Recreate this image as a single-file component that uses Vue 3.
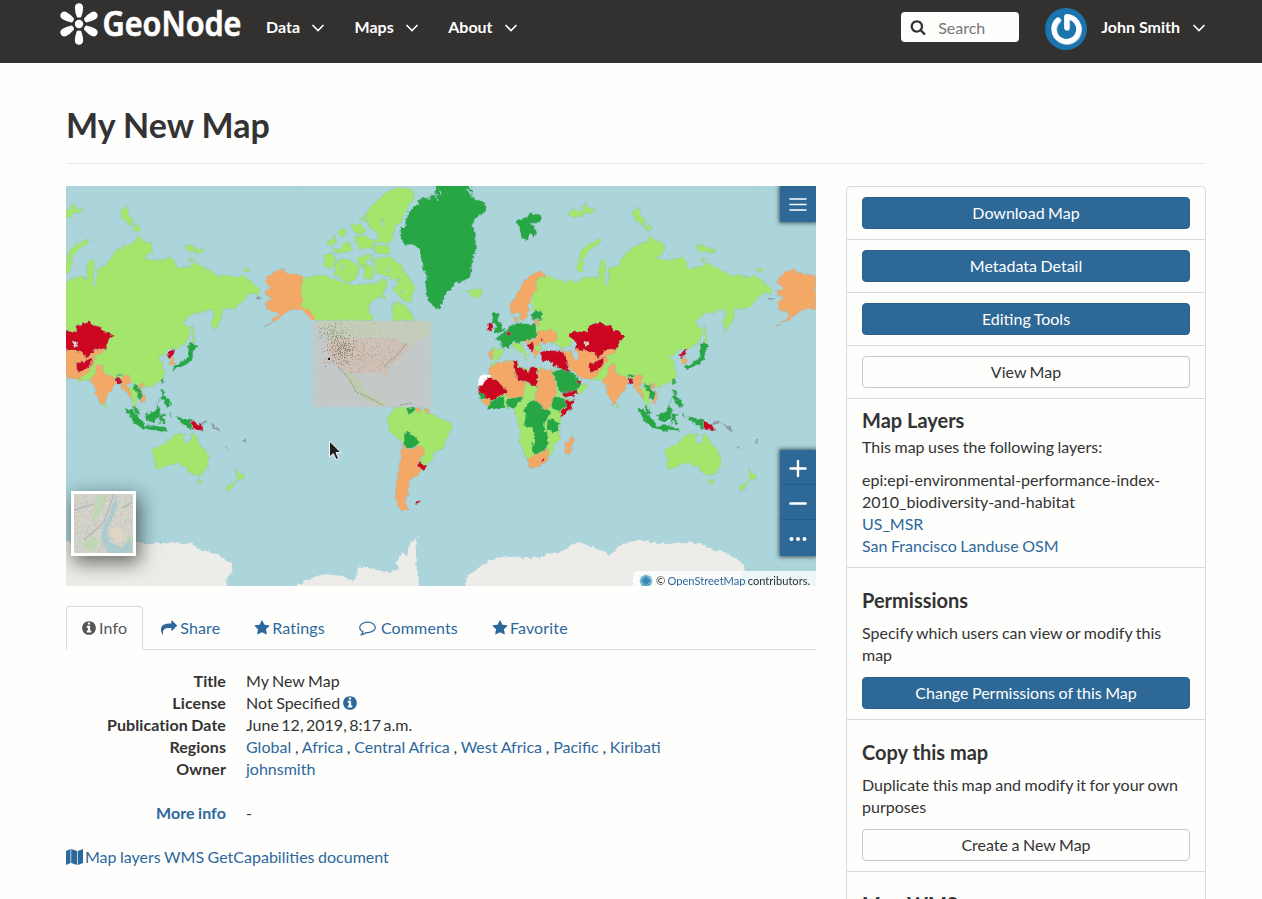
<script setup>
const nav = ['Data', 'Maps', 'About']

const icons = {
  info: 'M1152 1376v-160q0-14-9-23t-23-9h-96v-512q0-14-9-23t-23-9h-320q-14 0-23 9t-9 23v160q0 14 9 23t23 9h96v320h-96q-14 0-23 9t-9 23v160q0 14 9 23t23 9h448q14 0 23-9t9-23zm-128-896v-160q0-14-9-23t-23-9h-192q-14 0-23 9t-9 23v160q0 14 9 23t23 9h192q14 0 23-9t9-23zm640 416q0 209-103 385.5t-279.5 279.5-385.5 103-385.5-103-279.5-279.5-103-385.5 103-385.5 279.5-279.5 385.5-103 385.5 103 279.5 279.5 103 385.5z',
  star: 'M1728 647q0 22-26 48l-363 354 86 500q1 7 1 20 0 21-10.5 35.5t-30.5 14.5q-19 0-40-12l-449-236-449 236q-22 12-40 12-21 0-31.5-14.5t-10.5-35.5q0-6 2-20l86-500-364-354q-25-27-25-48 0-37 56-46l502-73 225-455q19-41 49-41t49 41l225 455 502 73q56 9 56 46z',
  share: 'M1792 640q0 26-19 45l-512 512q-19 19-45 19t-45-19-19-45v-256h-224q-98 0-175.5 6t-154 21.5-133 42.5-105.5 69.5-80 101-48.5 138.5-17.5 181q0 55 5 123 0 6 2.5 23.5t2.5 26.5q0 15-8.5 25t-23.5 10q-16 0-28-17-7-9-13-22t-13.5-30-10.5-24q-127-285-127-451 0-199 53-333 162-403 875-403h224v-256q0-26 19-45t45-19 45 19l512 512q19 19 19 45z',
  search: 'M1216 832q0-185-131.5-316.5t-316.5-131.5-316.5 131.5-131.5 316.5 131.5 316.5 316.5 131.5 316.5-131.5 131.5-316.5zm512 832q0 52-38 90t-90 38q-54 0-90-38l-343-342q-179 124-399 124-143 0-273.5-55.5t-225-150-150-225-55.5-273.5 55.5-273.5 150-225 225-150 273.5-55.5 273.5 55.5 225 150 150 225 55.5 273.5q0 220-124 399l343 343q37 37 37 90z',
}

const tabs = [
  { label: 'Info', icon: 'info', active: true, w: 17 },
  { label: 'Share', icon: 'share', w: 19 },
  { label: 'Ratings', icon: 'star', w: 18 },
  { label: 'Comments', icon: 'comment', w: 22 },
  { label: 'Favorite', icon: 'star', w: 18 },
]

const regions = ['Global', 'Africa', 'Central Africa', 'West Africa', 'Pacific', 'Kiribati']

const G = '#a4e66c', D = '#27a744', O = '#f3a965', R = '#cc0520', W = '#abd4db', P = '#edece8', S = '#8d9298'

/* Eastern hemisphere shapes; three units per map pixel. A third entry of true drops the coastline. */
const east = [
  [P, 'M-10,1142 L40,1120 L55,1130 L90,1100 L120,1088 L155,1102 L180,1112 L210,1128 L250,1095 L300,1082 L340,1090 L400,1095 L440,1090 L490,1092 L520,1112 L560,1120 L585,1135 L615,1155 L618,1170 L600,1200 L605,1240 L-10,1240Z', true],
  [G, 'M-10,292 L18,290 L45,303 L65,322 L50,345 L38,335 L42,350 L60,335 L75,318 L95,300 L112,312 L128,298 L160,292 L180,302 L178,270 L188,240 L202,250 L198,320 L206,322 L210,272 L235,258 L250,238 L270,210 L300,198 L325,185 L335,168 L352,185 L374,192 L376,215 L352,240 L395,242 L430,235 L445,250 L445,268 L470,262 L490,262 L500,248 L530,262 L545,272 L575,290 L600,288 L625,292 L650,290 L675,308 L700,330 L695,348 L670,340 L650,365 L625,388 L588,388 L582,420 L560,458 L552,430 L562,400 L555,390 L520,400 L495,402 L470,432 L492,450 L490,465 L478,490 L448,510 L420,512 L405,530 L392,532 L405,548 L412,580 L408,600 L370,622 L335,625 L300,600 L240,605 L190,600 L155,606 L140,592 L100,500 L66,512 L55,495 L30,488 L-12,480Z'],
  [O, 'M65,512 L95,515 L110,500 L180,510 L230,508 L230,520 L205,530 L205,545 L185,575 L160,600 L125,598 L95,570 L78,540Z'],
  [W, 'M96,488 L110,482 L112,495 L110,512 L118,528 L116,540 L104,538 L100,515Z'],
  [R, 'M90,465 L105,455 L148,458 L150,440 L185,428 L200,440 L215,438 L225,455 L240,458 L260,470 L245,482 L235,508 L200,512 L180,537 L165,520 L145,514 L108,510 L112,490 L95,478Z'],
  ['#e4dcd4', 'M137,490 L148,486 L150,498 L140,502Z'],
  [R, 'M148,552 L175,545 L195,536 L192,558 L175,570 L158,580 L150,575Z'],
  [O, 'M188,608 L205,585 L208,558 L228,556 L230,580 L262,596 L268,616 L258,630 L240,650 L232,672 L222,678 L208,650 L202,622Z'],
  [G, 'M228,672 L238,672 L240,682 L232,688Z'],
  [O, 'M285,588 L308,588 L312,612 L300,618 L318,650 L316,665 L300,640 L282,625Z'],
  [R, 'M265,595 L283,600 L282,614 L272,616Z'],
  [D, 'M268,586h14v6h-14Z'],
  [G, 'M308,625 L325,620 L332,640 L328,690 L320,682 L312,650Z'],
  [D, 'M318,614 L340,625 L348,648 L342,664 L330,655 L333,640 L320,630Z'],
  [O, 'M332,613 L350,612 L342,630 L357,655 L350,672 L340,670 L348,650Z'],
  [D, 'M293,688 L312,690 L348,728 L352,740 L380,738 L420,748 L420,757 L380,754 L345,747 L322,732Z M316,680 L330,685 L336,707 L325,704Z'],
  [D, 'M355,706 L380,698 L390,680 L400,690 L394,717 L380,729 L358,726Z M398,703 L420,706 L408,714 L418,734 L408,734 L402,722 L395,738Z M430,700l6,8-4,8z'],
  [D, 'M402,630 L412,635 L410,652 L428,660 L432,680 L420,686 L408,665 L400,655 L386,680 L404,650Z'],
  [D, 'M445,712 L475,718 L493,720 L493,750 L468,735Z'],
  [R, 'M493,722 L518,735 L532,757 L515,752 L495,750Z'],
  [S, 'M518,733 L540,722 L542,728 L522,738Z M548,730 L580,752 L580,758 L560,745Z M644,788 L658,780 L656,788Z M590,800l12,6-4,3z'],
  [G, 'M373,812 L400,800 L420,790 L425,782 L440,770 L455,762 L475,766 L468,782 L485,793 L492,778 L497,760 L508,772 L515,795 L535,810 L547,835 L545,858 L532,880 L510,890 L490,882 L475,865 L450,852 L425,858 L405,868 L385,868 L383,840Z M510,902 L524,900 L522,915 L512,916Z'],
  [G, 'M628,868 L640,882 L653,886 L645,900 L632,908 L630,895Z M626,905 L615,930 L600,935 L598,925 L615,912Z'],
  [R, 'M420,528 L432,516 L445,510 L440,526 L426,540Z'],
  [O, 'M427,540 L440,534 L443,552 L430,558Z'],
  [D, 'M484,502 L493,488 L511,502 L499,514 L495,542 L480,555 L455,566 L442,574 L439,560 L475,543 L485,530Z M402,600h7v14h-6z'],
  [G, 'M496,435 L502,450 L504,490 L497,490Z'],
  [G, 'M112,270 L118,240 L130,210 L155,190 L185,178 L182,194 L152,212 L135,235 L130,275 L120,280Z'],
  [G, 'M85,100 L105,90 L125,95 L140,70 L148,88 L170,90 L160,102 L140,100 L130,112 L100,115Z'],
  [G, 'M280,95 L298,84 L305,105 L318,125 L318,143 L295,128 L282,110Z M318,145 L330,133 L340,150 L328,160Z'],
  [G, 'M472,200 L490,195 L510,208 L532,212 L525,222 L500,218 L478,218Z M485,235 L500,240 L492,250Z M652,270 L667,265 L668,276 L655,278Z'],
  [O, 'M712,305 L740,278 L762,270 L790,282 L830,290 L830,388 L800,390 L780,398 L760,415 L711,443 L735,425 L755,405 L720,390 L715,370 L738,355 L712,345 L712,335 L735,330Z'],
  [S, 'M690,355h14v5h-14z'],
]

/* The Americas, Africa and Europe. */
const west = [
  [P, 'M-60,1240 L0,1215 L30,1200 L70,1185 L130,1190 L160,1208 L172,1195 L178,1162 L215,1168 L270,1180 L300,1172 L290,1150 L310,1120 L325,1128 L330,1095 L368,1062 L350,1085 L352,1150 L355,1200 L375,1240Z M495,1240 L505,1190 L540,1165 L580,1140 L620,1132 L670,1135 L720,1135 L760,1120 L790,1125 L840,1090 V1240Z', true],
  [D, 'M302,152 L322,135 L328,98 L355,75 L360,62 L410,45 L410,15 L505,15 L520,35 L520,55 L545,65 L565,78 L555,100 L530,115 L520,135 L530,165 L530,215 L520,240 L515,285 L500,302 L470,312 L450,335 L437,345 L430,375 L420,390 L400,382 L385,360 L380,315 L385,290 L375,275 L370,240 L360,210 L345,195 L320,197 L305,180Z'],
  [W, 'M388,48l5,14-4,2z M410,38l8,26-5,-4z M424,34l5,16-6,-6z M505,30l14,10-4,12z'],
  [G, 'M348,45 L335,75 L320,95 L305,125 L290,145 L275,190 L232,190 L240,165 L215,150 L198,110 L208,88 L228,70 L250,50 L270,32 L300,25 L335,30Z'],
  [G, 'M82,190 L108,170 L114,188 L92,202Z M116,158 L138,144 L142,160 L124,174Z M158,132 L188,138 L205,155 L180,168 L160,152Z M162,176 L195,168 L228,185 L224,207 L178,208 L172,190Z M96,212 L125,205 L145,186 L162,212 L118,224Z M222,198 L274,200 L272,224 L228,224Z M173,235 L207,226 L202,268 L180,260Z M184,118l12,-4 6,12-10,4z'],
  [G, 'M78,225 L100,222 L112,240 L94,272 L73,258Z M110,250 L135,238 L155,242 L182,268 L172,298 L150,312 L104,285Z M192,258 L224,260 L220,302 L196,298Z M210,225l14,4-4,22-8,-6z'],
  [G, 'M228,238 L272,233 L302,255 L322,290 L347,320 L342,340 L332,374 L303,355 L283,330 L298,310 L260,290 L230,282Z'],
  [W, 'M262,262l10,6-6,10z M296,290l8,14-8,-2z M315,330l-12,4 4,6z M250,120l6,24-8,-8z M126,262l14,-4-4,8z'],
  [G, 'M8,298 L30,295 L60,285 L110,300 L150,315 L200,315 L230,312 L258,295 L265,320 L250,345 L262,360 L240,355 L215,370 L207,390 L225,424 L45,424 L20,392 L8,385Z M278,375 L300,370 L320,385 L335,400 L350,424 L280,424Z'],
  [O, 'M-4,290 L7,292 L8,385 L30,392 L47,415 L47,424 L35,420 L18,398 L-4,388Z', true],
  [G, 'M285,685 L330,683 L385,690 L400,705 L430,720 L460,732 L462,745 L445,770 L440,790 L430,810 L405,820 L400,840 L385,857 L380,870 L365,850 L375,820 L350,800 L315,805 L310,790 L280,765 L268,740 L265,715 L275,705Z'],
  [D, 'M320,687 L345,683 L350,692 L330,707Z M315,765 L325,755 L345,770 L362,790 L345,805 L318,810Z'],
  [O, 'M351,685h15v18h-12z M378,688 L390,692 L388,704 L380,700Z M312,793 L320,810 L345,808 L360,798 L377,815 L376,828 L362,838 L362,865 L368,872 L358,888 L335,900 L330,920 L328,945 L318,970 L328,992 L305,992 L292,970 L288,945 L295,900 L302,850 L308,820Z'],
  [R, 'M360,846 L384,860 L374,872 L358,865Z M348,966h14v7h-14z'],
  [G, 'M538,640 L540,610 L570,585 L575,555 L645,542 L655,560 L690,572 L715,565 L760,575 L775,620 L795,660 L828,660 L815,690 L785,715 L782,760 L785,780 L760,800 L765,815 L750,835 L735,855 L710,865 L690,868 L685,840 L670,810 L660,780 L662,755 L650,710 L648,688 L610,685 L570,690 L550,670Z'],
  [O, 'M570,590 L570,565 L600,550 L645,543 L655,600 L688,612 L680,645 L670,655 L625,655 L600,625 L565,600Z'],
  [R, 'M538,640 L540,612 L570,592 L595,605 L627,640 L600,652 L575,665 L555,655Z'],
  ['#ffffff', 'M538,602 L552,586 L574,586 L571,597 L557,600 L553,618 L536,620Z'],
  [R, 'M643,543 L655,545 L655,565 L690,577 L700,562 L715,568 L715,624 L685,608 L655,602 L648,570Z'],
  [O, 'M717,570 L755,572 L765,600 L775,635 L760,670 L745,695 L720,685 L708,660 L715,620Z'],
  [G, 'M680,612 L713,624 L708,655 L690,672 L670,655Z'],
  [D, 'M622,658 L668,653 L665,668 L645,688 L625,685Z M572,670 L590,658 L615,652 L618,685 L590,692 L565,688Z M538,642 L553,640 L558,655 L543,663Z'],
  [O, 'M550,665 L565,657 L577,667 L565,684Z'],
  [D, 'M675,690 L685,672 L710,662 L730,685 L757,697 L745,715 L735,740 L745,765 L748,790 L745,810 L720,822 L705,828 L698,810 L705,790 L705,760 L700,745 L675,738 L680,720Z M757,665 L775,650 L795,660 L806,680 L780,697 L757,690Z M745,722 L760,718 L780,735 L778,757 L765,760 L745,755Z'],
  [R, 'M795,668 L828,660 L815,690 L785,715 L785,700 L808,680Z'],
  [O, 'M685,840 L705,825 L725,825 L735,810 L750,812 L748,840 L735,855 L710,865 L690,868Z M822,767 L825,785 L812,825 L795,822 L797,795 L812,780Z'],
  [R, 'M726,838 L735,838 L734,848 L727,848Z'],
  [G, 'M712,300 L745,290 L800,310 L800,470 L715,470 L712,425 L700,385 L700,350Z', true],
  [O, 'M632,385 L640,362 L660,335 L680,300 L700,285 L725,275 L742,288 L712,300 L712,330 L700,350 L690,375 L682,415 L668,428 L660,400 L640,405Z M645,415h15l-3,14h-12z'],
  [D, 'M580,405 L597,400 L600,425 L617,455 L588,464 L585,450 L594,440 L580,425Z M588,480 L605,465 L625,455 L632,440 L655,432 L710,435 L712,470 L690,485 L665,487 L635,490 L632,508 L605,505 L605,485Z M698,405 L712,392 L728,395 L728,422 L700,420Z'],
  [R, 'M565,435 L582,428 L582,450 L566,455Z M622,457 L636,460 L632,468Z'],
  [G, 'M508,335 L545,328 L553,345 L530,360 L515,352Z M580,508 L615,510 L608,530 L592,545 L580,540Z M640,492 L665,488 L668,502 L690,530 L680,540 L658,512 L640,505Z'],
  [O, 'M570,513h10v28h-10z M675,487 L708,478 L718,455 L755,452 L777,465 L772,485 L745,495 L722,492 L720,515 L708,540 L697,512Z M702,422h18v15h-12z'],
  [G, 'M706,500 L728,500 L726,514 L710,512Z'],
  [R, 'M680,495 L700,488 L707,508 L696,516Z M725,475 L735,480 L732,490Z'],
  [W, 'M728,510 L745,490 L780,500 L786,514 L740,518Z'],
  [R, 'M723,520 L740,513 L780,515 L797,518 L802,545 L815,580 L795,575 L775,560 L760,566 L762,548 L730,545Z'],
  [D, 'M760,578 L785,570 L820,580 L845,605 L850,620 L832,632 L790,642 L775,620Z'],
  [R, 'M790,642 L830,632 L838,645 L798,657Z M830,608l17,-8-3,13z'],
  [G, 'M848,618 L865,612 L862,630 L840,645 L832,632Z M760,570l12,-4-6,12z'],
  [D, 'M653,123 L685,113 L692,98 L727,108 L722,132 L697,132 L714,160 L702,174 L695,158 L682,189 L666,165Z'],
]

/* Small deterministic generator for the raster speckle of the overlays; soft gathers dots near the centre. */
function specks(n, x, y, w, h, colors, seed, soft = false) {
  let s = seed
  const rnd = () => ((s = (s * 16807) % 2147483647) / 2147483647)
  const pos = () => (soft ? (rnd() + rnd()) / 2 : rnd())
  return Array.from({ length: n }, () => ({
    x: Math.floor(x + pos() * w),
    y: Math.floor(y + pos() * h),
    c: colors[Math.floor(rnd() * colors.length)],
  }))
}
const overlayDots = [
  ...specks(900, 313, 321, 118, 86, ['#d0c4ba', '#bccacb', '#c9c4c0', '#cdcac4'], 91),
  ...specks(420, 326, 333, 74, 44, ['#c0aca1', '#d8c6b8', '#c3b2a7', '#b5aa9d'], 17, true),
  ...specks(230, 324, 332, 34, 36, ['#8f877c', '#a98f84', '#9aa08d'], 45, true),
  ...specks(130, 316, 319, 34, 26, ['#94a287', '#a4b199'], 123, true).filter((d) => d.y > 321),
  ...specks(170, 345, 321, 70, 17, ['#b8c5ac', '#c4cbb5'], 423),
]
const landDots = specks(330, 66, 186, 750, 400, ['#9cc7ce', '#b9d0cc', '#a3c3cf'], 7)
const thumbDots = specks(1500, 0, 0, 59, 59, ['#c4cbc6', '#d9d0c6', '#c6d4bf', '#b4cfd3', '#e0dbd0', '#bec0ba', '#dccab8'], 33)
</script>

<template>
  <div class="page">
    <header class="topbar">
      <svg class="logo" width="186" height="50" viewBox="0 0 186 50">
        <g fill="#fff" transform="translate(21 24)">
          <circle r="4.2" />
          <path v-for="a in 6" :key="a" :transform="`rotate(${a * 60})`" d="M-2.2 -7 Q-4.3 -13 -4.1 -17 Q-3.6 -20.8 0 -20.8 Q3.6 -20.8 4.1 -17 Q4.3 -13 2.2 -7 Q0 -5.8 -2.2 -7Z" />
        </g>
        <text x="44.5" y="36" textLength="139" lengthAdjust="spacingAndGlyphs" class="wordmark">GeoNode</text>
      </svg>
      <nav class="menu">
        <a v-for="n in nav" :key="n">{{ n }}<svg class="chev" width="14" height="8" viewBox="0 0 14 8"><path d="M1.5 1 L7 6.5 L12.5 1" /></svg></a>
      </nav>
      <div class="search">
        <svg width="16" height="16" viewBox="0 0 1792 1792"><path :d="icons.search" fill="#333" /></svg>
        <span>Search</span>
      </div>
      <svg class="avatar" width="42" height="42" viewBox="0 0 42 42">
        <circle cx="21" cy="21" r="21" fill="#1a74ae" />
        <g fill="none" stroke-width="5.2" stroke-linecap="round" stroke-linejoin="round">
          <path d="M13 11.900 A12.400 12.400 0 1 0 21.700 8.700 V19.500" stroke="#a9c3d3" transform="translate(.8 .8)" />
          <path d="M13 11.900 A12.400 12.400 0 1 0 21.700 8.700 V19.500" stroke="#fff" />
        </g>
      </svg>
      <a class="user">John Smith<svg class="chev" width="14" height="8" viewBox="0 0 14 8"><path d="M1.5 1 L7 6.5 L12.5 1" /></svg></a>
    </header>

    <div class="container">
      <h1>My New Map</h1>
      <div class="columns">
        <main>
          <div class="map">
            <svg class="world" width="750" height="400" viewBox="66 186 750 400">
              <defs>
                <filter id="coast" x="56" y="176" width="770" height="420" filterUnits="userSpaceOnUse" color-interpolation-filters="sRGB">
                  <feTurbulence type="fractalNoise" baseFrequency="0.24" numOctaves="2" seed="4" result="n" />
                  <feDisplacementMap in="SourceGraphic" in2="n" scale="5" xChannelSelector="R" yChannelSelector="G" />
                </filter>
                <g id="east">
                  <path v-for="(p, i) in east" :key="i" :fill="p[0]" :d="p[1]" :stroke="p[2] ? 'none' : null" />
                </g>
              </defs>
              <rect x="66" y="186" width="750" height="400" fill="#abd4db" />
              <rect v-for="(d, i) in landDots" :key="i" :x="d.x" :y="d.y" width="1" height="1" :fill="d.c" />
              <g filter="url(#coast)">
                <g stroke="#8fb8bd" stroke-width="1.5" stroke-opacity=".7" transform="translate(-1 -.8)">
                  <use href="#east" transform="translate(28 180) scale(.33333)" />
                  <use href="#east" transform="translate(540 180) scale(.33333)" />
                  <g transform="translate(300 180) scale(.33333)">
                    <path v-for="(p, i) in west" :key="i" :fill="p[0]" :d="p[1]" :stroke="p[2] ? 'none' : null" />
                  </g>
                </g>
              </g>
              <rect x="313" y="321" width="118" height="86" fill="#c3c9c9" />
              <path d="M316 321 L431 321 L431 332 L410 346 L345 338 L330 340Z" fill="#c3cdb9" />
              <path d="M328 338 L395 338 L410 346 L400 358 L388 367 L388 378 L378 372 L352 374 L332 362 L327 350Z" fill="#cfc0b5" />
              <path d="M338 365 L352 373 L362 382 L366 392 L378 398 L386 405 L380 407 L362 398 L350 384Z" fill="#bfcbb0" />
              <rect v-for="(d, i) in overlayDots" :key="'o' + i" :x="d.x" :y="d.y" width="1" height="1" :fill="d.c" />
              <path d="M338 366 L350 380 L356 392 L374 400 L384 406 M400 405 L412 403" fill="none" stroke="#8b9685" stroke-dasharray="2 1" />
              <path d="M384 366 L396 356 L407 343" fill="none" stroke="#b09f94" stroke-width="1.500" stroke-dasharray="2 1" />
              <rect x="328" y="358" width="2" height="2" fill="#222" />
              <path d="M329.500 441 V457 L333.300 453.600 L336 459.600 L338.700 458.400 L336 452.600 H341Z" fill="#1e1e1e" stroke="#fff" stroke-width="1" />
            </svg>

            <div class="tool menu-btn">
              <svg width="36" height="36" viewBox="0 0 36 36"><path d="M9.500 13H26.500M9.500 18.500H26.500M9.500 24H26.500" stroke="#fff" stroke-width="1.700" /></svg>
            </div>
            <div class="tool zoom">
              <svg width="36" height="35" viewBox="0 0 36 35"><path d="M10.500 18.500H25.500M18 11V26" stroke="#fff" stroke-width="2.400" stroke-linecap="round" /></svg>
              <svg width="36" height="35" viewBox="0 0 36 35"><path d="M10.500 18.500H25.500" stroke="#fff" stroke-width="2.600" stroke-linecap="round" /></svg>
              <svg width="36" height="36" viewBox="0 0 36 36"><g fill="#fff"><circle cx="11.500" cy="19" r="2" /><circle cx="18" cy="19" r="2" /><circle cx="24.500" cy="19" r="2" /></g></svg>
            </div>
            <svg class="thumb" width="65" height="65" viewBox="-3 -3 65 65">
              <rect x="-3" y="-3" width="65" height="65" fill="#fff" />
              <rect width="59" height="59" fill="#d5d3c9" />
              <rect v-for="(d, i) in thumbDots" :key="i" :x="d.x" :y="d.y" width="1" height="1" :fill="d.c" />
              <g opacity=".6">
                <path d="M22 2 L36 0 L24 22 L18 30Z M8 50 L20 42 L26 48 L16 58Z M50 46 L59 40 V52Z" fill="#b7dba8" />
                <path d="M42 2 L34 24 L28 34 L27 46 L34 59 L59 59 L56 44 L48 54 L36 48 L33 36 L44 12Z" fill="#93c9d4" />
                <path d="M36 36 L46 32 L50 44 L42 50Z" fill="#ead9c4" />
                <path d="M40 0 L30 28 L10 46 M0 16 L20 10 M48 14 L59 8" fill="none" stroke="#a3adb1" stroke-width="1.500" />
              </g>
            </svg>
            <div class="credit">
              <svg width="14" height="14" viewBox="0 0 14 14"><path d="M7 .5 L12 2.500 L13.500 7 L12 11.500 L7 13.500 L2 11.500 L.5 7 L2 2.500Z" fill="#7ec3cf" /><path d="M7 3 L12 7 L7 11 L2 7Z" fill="#3b86b8" /><path d="M2.500 5.500 L7 2 L11.500 5.500M3 9.500 L7 12 L11 9.500" fill="none" stroke="#4a95bf" /></svg>
              <span>© <a>OpenStreetMap</a> contributors.</span>
            </div>
          </div>

          <ul class="tabs">
            <li v-for="t in tabs" :key="t.label" :class="{ active: t.active }">
              <span class="tico" :style="{ width: t.w + 'px' }">
                <svg v-if="t.icon === 'comment'" width="17" height="16" viewBox="0 0 17 16"><path d="M8.500 2.200 C12.700 2.200 16.300 4.500 16.300 7.400 C16.300 10.300 12.700 12.600 8.500 12.600 L7.300 12.500 C5.800 13.700 4.200 14.400 2.400 14.600 C3.200 13.800 3.800 12.900 3.900 11.600 C2 10.700 .7 9.200 .7 7.400 C.7 4.500 4.300 2.200 8.500 2.200Z" fill="none" stroke="currentColor" stroke-width="1.200" /></svg>
                <svg v-else width="16" height="16" viewBox="0 0 1792 1792"><path :d="icons[t.icon]" fill="currentColor" /></svg>
              </span>{{ t.label }}
            </li>
          </ul>

          <dl>
            <dt>Title</dt><dd>My New Map</dd>
            <dt>License</dt>
            <dd>Not Specified <svg class="ico" width="16" height="16" viewBox="0 0 1792 1792"><path :d="icons.info" fill="#2d689c" /></svg></dd>
            <dt>Publication Date</dt><dd class="date">June 12, 2019, 8:17 a.m.</dd>
            <dt>Regions</dt>
            <dd class="regions"><template v-for="(r, i) in regions" :key="r"><a>{{ r }}</a><span v-if="i < regions.length - 1"> , </span></template></dd>
            <dt>Owner</dt><dd><a>johnsmith</a></dd>
            <dt class="more"><a>More info</a></dt><dd class="more">-</dd>
          </dl>

          <a class="wms"><svg width="17" height="16" viewBox="0 0 17 16"><path d="M0 2 L4.500 0 V14 L0 16Z M5.200 0 L11.200 2 V16 L5.200 14Z M11.900 2 L17 0 V14 L11.900 16Z" fill="#2d689c" /></svg>Map layers WMS GetCapabilities document</a>
        </main>

        <aside>
          <div class="item"><a class="btn primary">Download Map</a></div>
          <div class="item"><a class="btn primary">Metadata Detail</a></div>
          <div class="item"><a class="btn primary">Editing Tools</a></div>
          <div class="item"><a class="btn">View Map</a></div>
          <div class="item">
            <h4 class="tight">Map Layers</h4>
            <p>This map uses the following layers:</p>
            <ul class="layers">
              <li>epi:epi-environmental-performance-index-2010_biodiversity-and-habitat</li>
              <li><a>US_MSR</a></li>
              <li><a>San Francisco Landuse OSM</a></li>
            </ul>
          </div>
          <div class="item">
            <h4>Permissions</h4>
            <p>Specify which users can view or modify this map</p>
            <a class="btn primary">Change Permissions of this Map</a>
          </div>
          <div class="item">
            <h4>Copy this map</h4>
            <p>Duplicate this map and modify it for your own purposes</p>
            <a class="btn">Create a New Map</a>
          </div>
          <div class="item"><h4>Map WMS</h4></div>
        </aside>
      </div>
    </div>
  </div>
</template>

<style>
html, body { margin: 0; overflow: hidden; background: #fefefd; }
</style>

<style scoped>
.page { box-sizing: border-box; width: 1262px; height: 899px; overflow: hidden; background: #fefefd; color: #333; font: 16px/22px Lato, "Open Sans", sans-serif; word-spacing: -.6px; }
svg { display: block; flex: none; }
a { color: #2d689c; text-decoration: none; }
ul, dl, h1, h4, p, dd { margin: 0; padding: 0; list-style: none; }
.topbar { display: flex; align-items: flex-start; height: 63px; background: #333130; }
.logo { margin-left: 58px; overflow: visible; }
.wordmark { font: 600 33.500px "Noto Sans", "Open Sans", sans-serif; fill: #fff; stroke: #fff; stroke-width: .7px; }
.menu { display: flex; gap: 29.500px; margin: 16px 0 0 22px; }
.menu a, .user { display: flex; align-items: center; color: #fff; font-weight: 700; line-height: 22px; }
.chev { margin: 2px 0 0 11px; fill: none; stroke: #fff; stroke-width: 1.600; }
.search { box-sizing: border-box; display: flex; align-items: center; gap: 12px; width: 118px; height: 30px; margin: 12px 26px 0 auto; padding-left: 9px; border-radius: 4px; background: #fefefd; color: #777; }
.search span { padding-top: 2px; }
.avatar { margin-top: 8px; }
.user { margin: 16px 56px 0 14px; word-spacing: 0; }
.user .chev { margin-left: 12px; }
.container { width: 1140px; margin-left: 66px; }
h1 { height: 100px; border-bottom: 1px solid #eae9e8; font-size: 34px; font-weight: 700; line-height: 123px; word-spacing: 0; }
.columns { display: flex; justify-content: space-between; align-items: flex-start; margin-top: 22px; }
main { width: 750px; }
.map { position: relative; width: 750px; height: 400px; overflow: hidden; }
.tool { position: absolute; right: 0; width: 36px; background: #2d6896; box-shadow: 0 0 4px 1px rgba(0, 0, 0, .6); }
.menu-btn { top: 0; height: 36px; }
.zoom { top: 264px; height: 106px; }
.zoom svg + svg { box-shadow: 0 -1px 0 #285d88; }
.thumb { position: absolute; left: 5px; top: 305px; box-shadow: 3px 6px 18px 1px rgba(0, 0, 0, .55); }
.credit { position: absolute; right: 0; bottom: 0; display: flex; align-items: center; gap: 3px; box-sizing: border-box; width: 183px; height: 15px; padding: 4px 0 0 6px; border-radius: 4px 0 0 0; background: rgba(255, 255, 255, .8); font-size: 11.100px; line-height: 14px; white-space: nowrap; }
.tabs { display: flex; gap: 2px; margin-top: 20px; height: 43px; border-bottom: 1px solid #d9d9d8; letter-spacing: .15px; }
.tabs li { box-sizing: border-box; display: flex; height: 44px; padding: 11px 16px; border-radius: 4px 4px 0 0; color: #2d689c; white-space: nowrap; }
.tabs .active { padding: 10px 15px; border: 1px solid #d9d9d8; border-bottom-color: #fefefd; background: #fefefd; color: #555; }
.tico { display: inline-block; padding-top: 3px; }
.active .tico svg { margin-left: -1px; }
dl { display: grid; grid-template-columns: 160px 1fr; column-gap: 20px; margin-top: 20px; }
dt { text-align: right; font-weight: 700; letter-spacing: .08px; }
.more { margin-top: 22px; }
.ico { display: inline-block; vertical-align: -2px; margin-left: -2px; }
.date { word-spacing: -1.600px; }
.regions { white-space: pre; word-spacing: -.35px; }
.wms { display: flex; align-items: center; gap: 2px; margin-top: 22px; }
aside { box-sizing: border-box; width: 360px; border: 1px solid #d9d9d8; border-radius: 4px 4px 0 0; }
.item { padding: 10px 15px; border-bottom: 1px solid #d9d9d8; }
.btn { box-sizing: border-box; display: block; height: 32px; border: 1px solid #c8c8c8; border-radius: 4px; color: #333; text-align: center; line-height: 30px; }
.primary { border-color: #2a608b; background: #2d6896; color: #fff; }
h4 { margin: 11px 0; font-size: 20px; font-weight: 700; line-height: 22px; word-spacing: 0; }
h4.tight { margin: 0 0 5px; }
p { margin-bottom: 11px; }
</style>
